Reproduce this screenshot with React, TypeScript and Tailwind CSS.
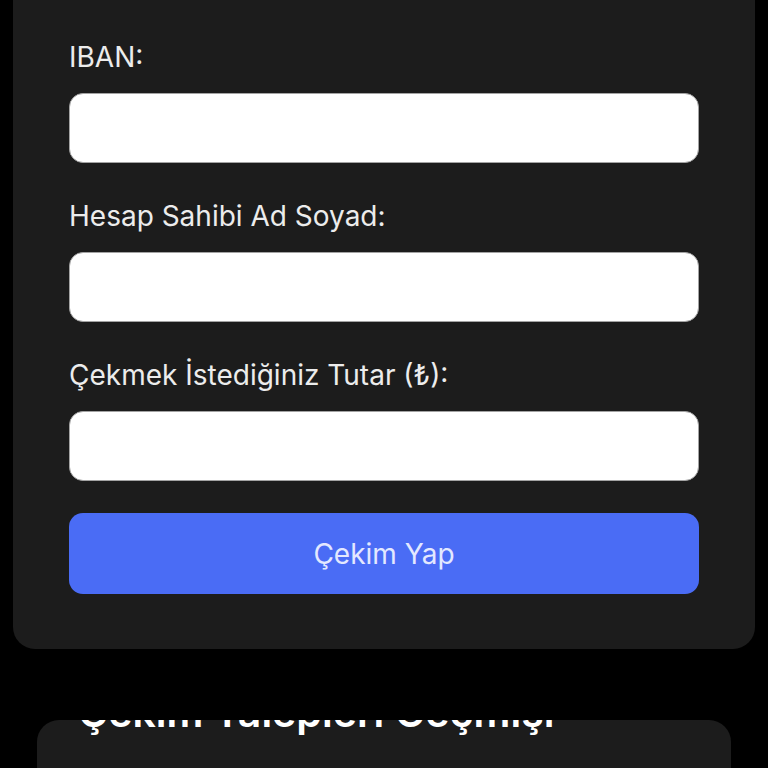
import { useState } from 'react'

const FONT = { fontFamily: 'Inter, "Noto Sans", "Liberation Sans", sans-serif' }

function Field({ label, value, onChange, type = 'text' }: { label: string; value: string; onChange: (v: string) => void; type?: string }) {
  return (
    <div className="flex flex-col">
      <label className="block h-[34px] text-[28px] leading-[34px] text-[#ececec] mb-[19px] whitespace-nowrap">{label}</label>
      <input
        type={type}
        value={value}
        onChange={(e) => onChange(e.target.value)}
        className="h-[70px] w-full rounded-[14px] bg-white border border-[#a3a3a3] px-4 text-[24px] text-black outline-none"
      />
    </div>
  )
}

export default function App() {
  const [iban, setIban] = useState('')
  const [owner, setOwner] = useState('')
  const [amount, setAmount] = useState('')

  return (
    <div className="min-h-[768px] h-[768px] overflow-hidden bg-black" style={FONT}>
      {/* withdraw form card */}
      <div className="mx-[13px] -mt-[30px] pt-[70px] pb-[55px] px-[56px] rounded-[22px] bg-[#1c1c1c] flex flex-col">
        <div className="flex flex-col gap-[36px]">
          <Field label="IBAN:" value={iban} onChange={setIban} />
          <Field label="Hesap Sahibi Ad Soyad:" value={owner} onChange={setOwner} />
          <Field label="Çekmek İstediğiniz Tutar (₺):" value={amount} onChange={setAmount} type="number" />
        </div>
        <button className="mt-[32px] h-[81px] w-full rounded-[14px] bg-[#4a6cf5] text-[28px] text-[#e3e8ff]">
          Çekim Yap
        </button>
      </div>

      {/* history card */}
      <div className="mx-[37px] mt-[71px] h-[200px] rounded-[22px] bg-[#1c1c1c] overflow-hidden px-[41px]">
        <h2 className="-mt-[32px] text-[41px] leading-[48px] font-semibold text-white whitespace-nowrap">Çekim Talepleri Geçmişi</h2>
      </div>
    </div>
  )
}
